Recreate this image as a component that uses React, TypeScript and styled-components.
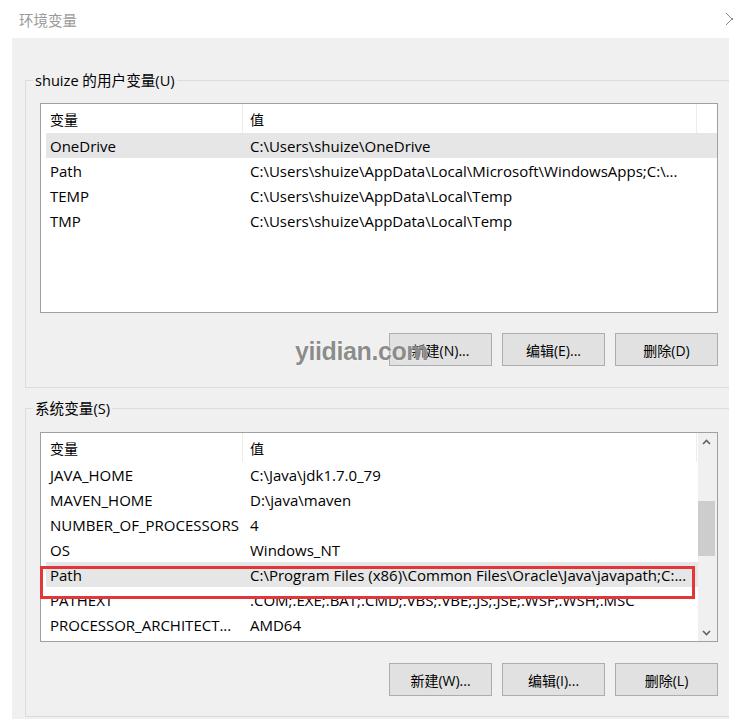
import React from "react";
import styled, { createGlobalStyle } from "styled-components";

const FONT = `"Open Sans", "Noto Sans CJK SC", sans-serif`;

const GlobalStyle = createGlobalStyle`
  html, body { margin: 0; padding: 0; background: #fff; }
  body { font-family: ${FONT}; }
`;

const Window = styled.div`
  position: relative;
  width: 733px;
  height: 719px;
  overflow: hidden;
  background: #fff;
  font-family: ${FONT};
  font-size: 14px;
  color: #000;
`;

const TitleBar = styled.div`
  height: 38px;
  display: flex;
  align-items: center;
  justify-content: space-between;
  padding-left: 19px;
  box-sizing: border-box;
`;

const Title = styled.span`
  font-family: "Noto Sans CJK SC", sans-serif;
  font-size: 14.5px;
  color: #9a9a9a;
`;

const Close = styled.svg`
  flex-shrink: 0;
  margin-right: -6px;
`;

const Body = styled.div`
  margin-left: 12px;
  width: 717px;
  height: 681px;
  background: #f0f0f0;
  overflow: hidden;
  padding-top: 32px;
  box-sizing: border-box;
`;

const Group = styled.fieldset<{ $gapTop: number }>`
  margin: ${(p) => p.$gapTop}px 0 0 13px;
  width: 740px;
  box-sizing: border-box;
  border: 1px solid #dcdcdc;
  padding: 0;
  min-inline-size: 0;
`;

const Legend = styled.legend`
  font-size: 14.6px;
  line-height: 20px;
  padding: 0 2px;
  margin-left: 7px;
  color: #000;
`;

const GroupContent = styled.div<{ $listTop: number; $bottom: number }>`
  padding: ${(p) => p.$listTop}px 0 ${(p) => p.$bottom}px 14px;
`;

const ListFrame = styled.div`
  position: relative;
  width: 678px;
`;

const ListView = styled.div`
  width: 678px;
  height: 210px;
  box-sizing: border-box;
  border: 1px solid #a0a0a0;
  background: #fff;
  display: flex;
  overflow: hidden;
`;

const ListBody = styled.div`
  flex: 1;
  display: flex;
  flex-direction: column;
  overflow: hidden;
`;

const HeaderRow = styled.div`
  display: grid;
  grid-template-columns: 197px 454px;
  margin-left: 5px;
  height: 29px;
  flex-shrink: 0;
`;

const HeaderCell = styled.div<{ $pad: number }>`
  display: flex;
  align-items: center;
  padding-left: ${(p) => p.$pad}px;
  border-right: 1px solid #ececec;
  box-sizing: border-box;
  font-family: "Noto Sans CJK SC", sans-serif;
  font-size: 14px;
`;

const Row = styled.div<{ $selected?: boolean }>`
  display: grid;
  grid-template-columns: 197px 454px;
  margin-left: 5px;
  height: 25px;
  flex-shrink: 0;
  align-items: center;
  background: ${(p) => (p.$selected ? "#e6e6e6" : "transparent")};
`;

const Cell = styled.div<{ $pad: number }>`
  padding-left: ${(p) => p.$pad}px;
  white-space: nowrap;
  overflow: hidden;
  font-size: 15px;
  line-height: 26px;
  height: 25px;
`;

const ScrollBar = styled.div`
  width: 19px;
  display: flex;
  flex-direction: column;
  background: #f0f0f0;
  flex-shrink: 0;
`;

const ScrollArrow = styled.div`
  height: 17px;
  display: flex;
  align-items: center;
  justify-content: center;
  padding-right: 2px;
  color: #606060;
`;

const ScrollTrack = styled.div<{ $offset: number }>`
  flex: 1;
  padding-top: ${(p) => p.$offset}px;
  padding-right: 2px;
`;

const Thumb = styled.div`
  height: 55px;
  background: #cdcdcd;
`;

const RedBox = styled.div`
  position: absolute;
  left: 0;
  top: 134px;
  width: 655px;
  height: 33px;
  box-sizing: border-box;
  border: 3px solid #e3363b;
  pointer-events: none;
`;

const ButtonRow = styled.div<{ $top: number }>`
  display: flex;
  justify-content: flex-end;
  gap: 10px;
  width: 678px;
  margin-top: ${(p) => p.$top}px;
`;

const Button = styled.button`
  width: 103px;
  height: 33px;
  border: 1px solid #adadad;
  background: #e1e1e1;
  font-family: ${FONT};
  font-size: 14px;
  color: #000;
  padding: 0;
`;

const Watermark = styled.div`
  position: absolute;
  left: 295px;
  top: 339px;
  font-family: "Liberation Sans", sans-serif;
  font-weight: bold;
  font-size: 25px;
  line-height: 25px;
  letter-spacing: -0.4px;
  color: rgba(120, 120, 120, 0.85);
  text-shadow: 0 0 2px rgba(255, 255, 255, 0.9);
  pointer-events: none;
`;

type Var = { name: string; value: string; selected?: boolean };

const userVars: Var[] = [
  { name: "OneDrive", value: "C:\\Users\\shuize\\OneDrive", selected: true },
  { name: "Path", value: "C:\\Users\\shuize\\AppData\\Local\\Microsoft\\WindowsApps;C:\\..." },
  { name: "TEMP", value: "C:\\Users\\shuize\\AppData\\Local\\Temp" },
  { name: "TMP", value: "C:\\Users\\shuize\\AppData\\Local\\Temp" },
];

const sysVars: Var[] = [
  { name: "JAVA_HOME", value: "C:\\Java\\jdk1.7.0_79" },
  { name: "MAVEN_HOME", value: "D:\\java\\maven" },
  { name: "NUMBER_OF_PROCESSORS", value: "4" },
  { name: "OS", value: "Windows_NT" },
  { name: "Path", value: "C:\\Program Files (x86)\\Common Files\\Oracle\\Java\\javapath;C:...", selected: true },
  { name: "PATHEXT", value: ".COM;.EXE;.BAT;.CMD;.VBS;.VBE;.JS;.JSE;.WSF;.WSH;.MSC" },
  { name: "PROCESSOR_ARCHITECT...", value: "AMD64" },
];

const Chevron: React.FC<{ down?: boolean }> = ({ down }) => (
  <svg width="9" height="6" viewBox="0 0 9 6">
    <path
      d={down ? "M1 1 L4.5 4.5 L8 1" : "M1 5 L4.5 1.5 L8 5"}
      fill="none"
      stroke="currentColor"
      strokeWidth="1.6"
    />
  </svg>
);

const VarList: React.FC<{ vars: Var[]; scroll?: boolean }> = ({ vars, scroll }) => (
  <ListView>
    <ListBody>
      <HeaderRow>
        <HeaderCell $pad={4}>变量</HeaderCell>
        <HeaderCell $pad={7}>值</HeaderCell>
      </HeaderRow>
      {vars.map((v) => (
        <Row key={v.name + v.value} $selected={v.selected}>
          <Cell $pad={4}>{v.name}</Cell>
          <Cell $pad={7}>{v.value}</Cell>
        </Row>
      ))}
    </ListBody>
    {scroll && (
      <ScrollBar>
        <ScrollArrow>
          <Chevron />
        </ScrollArrow>
        <ScrollTrack $offset={51}>
          <Thumb />
        </ScrollTrack>
        <ScrollArrow>
          <Chevron down />
        </ScrollArrow>
      </ScrollBar>
    )}
  </ListView>
);

export default function App() {
  return (
    <>
      <GlobalStyle />
      <Window>
        <TitleBar>
          <Title>环境变量</Title>
          <Close width="14" height="14" viewBox="0 0 14 14">
            <path d="M1 1 L13 13 M13 1 L1 13" stroke="#8a8a8a" strokeWidth="1" fill="none" />
          </Close>
        </TitleBar>
        <Body>
          <Group $gapTop={0}>
            <Legend>shuize 的用户变量(U)</Legend>
            <GroupContent $listTop={13} $bottom={21}>
              <ListFrame>
                <VarList vars={userVars} />
              </ListFrame>
              <ButtonRow $top={20}>
                <Button>新建(N)...</Button>
                <Button>编辑(E)...</Button>
                <Button>删除(D)</Button>
              </ButtonRow>
            </GroupContent>
          </Group>
          <Group $gapTop={10}>
            <Legend>系统变量(S)</Legend>
            <GroupContent $listTop={14} $bottom={20}>
              <ListFrame>
                <VarList vars={sysVars} scroll />
                <RedBox />
              </ListFrame>
              <ButtonRow $top={21}>
                <Button>新建(W)...</Button>
                <Button>编辑(I)...</Button>
                <Button>删除(L)</Button>
              </ButtonRow>
            </GroupContent>
          </Group>
        </Body>
        <Watermark>yiidian.com</Watermark>
      </Window>
    </>
  );
}
